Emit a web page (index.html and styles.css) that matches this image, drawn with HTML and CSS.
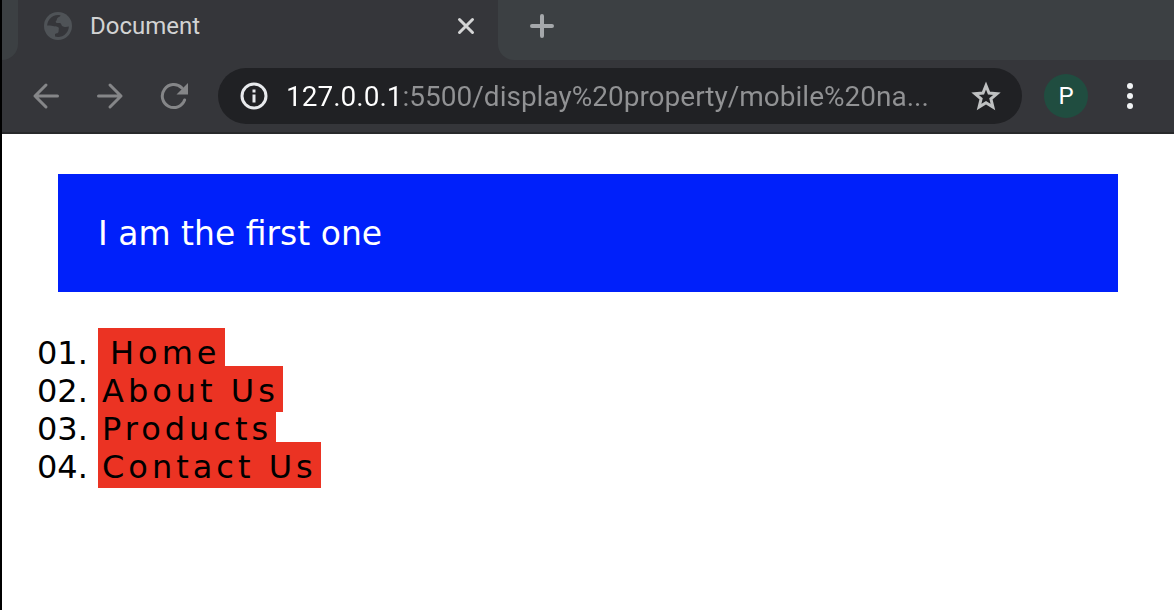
FILE: index.html
```html
<!DOCTYPE html>
<html lang="en">
<head>
<meta charset="utf-8">
<meta name="viewport" content="width=device-width, initial-scale=1">
<title>Document</title>
<link rel="stylesheet" href="styles.css">
</head>
<body class="window">
<header class="browser">
  <div class="tabs">
    <div class="tab-before"></div>
    <div class="tab">
      <svg class="globe" viewBox="0 0 28 28" width="28" height="28" aria-hidden="true">
        <circle cx="14" cy="14" r="14" fill="#4f5357"/>
        <path d="M16.500 3.300C16.500 5 14.500 5 13.500 6c-.9 1.100-.5 2.300-1.500 3-.8.900.2 2 1.500 2h2.500c1.300 0 1.200 2.500 2.500 3.300 1.300.8 4.200.9 6.400.2A11 11 0 0 1 11 24.600v-2.300c0-1 3.500-.7 3.500-2.600 0-1.800 1.100-3.800-.7-4.700-1.800-.8-3.600-.2-4.800-.9-1.600-1-3.600-.6-5.900-.6A11 11 0 0 1 16.500 3.300z" fill="#35363a"/>
      </svg>
      <span class="tab-title">Document</span>
      <button class="icon-button close" aria-label="Close tab">
        <svg viewBox="0 0 20 20" width="20" height="20" fill="none" stroke="#d4d5d5" stroke-width="3" stroke-linecap="round"><path d="M3.500 3.500l13 13M16.500 3.500l-13 13"/></svg>
      </button>
    </div>
    <div class="tab-after">
      <button class="icon-button" aria-label="New tab">
        <svg viewBox="0 0 24 24" width="24" height="24" fill="none" stroke="#a5a8ab" stroke-width="4" stroke-linecap="round"><path d="M12 2v20M2 12h20"/></svg>
      </button>
    </div>
  </div>
  <nav class="toolbar" aria-label="Browser toolbar">
    <button class="icon-button" aria-label="Back">
      <svg viewBox="0 0 28 28" width="28" height="28" fill="none" stroke="#858688" stroke-width="3" stroke-linecap="round" stroke-linejoin="round"><path d="M25.500 14H3M14 3L3 14l11 11"/></svg>
    </button>
    <button class="icon-button" aria-label="Forward">
      <svg viewBox="0 0 28 28" width="28" height="28" fill="none" stroke="#858688" stroke-width="3" stroke-linecap="round" stroke-linejoin="round"><path d="M2.500 14H25M14 3l11 11-11 11"/></svg>
    </button>
    <button class="icon-button" aria-label="Reload">
      <svg viewBox="0 0 28 28" width="28" height="28"><path d="M21.800 5.800A11.500 11.500 0 1 0 24.600 18" fill="none" stroke="#858688" stroke-width="3" stroke-linecap="round"/><path d="M28 1v11.500H16.500z" fill="#858688"/></svg>
    </button>
    <div class="omnibox">
      <svg viewBox="0 0 28 28" width="28" height="28" aria-hidden="true"><circle cx="14" cy="14" r="12" fill="none" stroke="#e8eaed" stroke-width="3"/><path d="M12.500 7.500h3v3h-3zM12.500 12.500h3v8h-3z" fill="#e8eaed"/></svg>
      <input class="address" type="text" aria-label="Address" value="127.0.0.1:5500/display%20property/mobile%20na...">
      <button class="icon-button" aria-label="Bookmark this page">
        <svg viewBox="0 0 30 30" width="30" height="30" fill="none" stroke="#bfc1c2" stroke-width="3"><path d="M15 4.500l3 7.500 8 .7-6.100 5.200 2 8.100-6.900-4.300L8.100 26l2-8.100L4 12.700l8-.7z"/></svg>
      </button>
    </div>
    <button class="avatar" aria-label="Profile P">P</button>
    <button class="icon-button" aria-label="Menu">
      <svg viewBox="0 0 28 28" width="28" height="28" fill="#f1f3f4"><circle cx="14" cy="4" r="3"/><circle cx="14" cy="14" r="3"/><circle cx="14" cy="24" r="3"/></svg>
    </button>
  </nav>
</header>
<main class="page">
  <div class="first">I am the first one</div>
  <ol class="menu">
    <li><a class="menu-link menu-home" href="#home">Home</a></li>
    <li><a class="menu-link" href="#about">About Us</a></li>
    <li><a class="menu-link" href="#products">Products</a></li>
    <li><a class="menu-link" href="#contact">Contact Us</a></li>
  </ol>
</main>
</body>
</html>
```

FILE: styles.css
```css
* {
  box-sizing: border-box;
}

.window {
  margin: 0;
  min-height: 100vh;
  border-left: 2px solid #000;
  background: #fff;
}

.browser {
  background: #35363a;
  border-bottom: 2px solid #28292b;
  font-family: Roboto, "Liberation Sans", sans-serif;
}

.tabs {
  display: flex;
  height: 60px;
}

.tab-before {
  width: 16px;
  background: #3c4043;
  border-bottom-right-radius: 16px;
}

.tab {
  display: flex;
  align-items: center;
  width: 480px;
  padding: 0 22px 8px 26px;
}

.globe {
  flex: none;
}

.tab-title {
  flex: 1;
  margin-left: 18px;
  font-size: 24px;
  line-height: 28px;
  color: #d2d3d3;
}

.tab-after {
  flex: 1;
  display: flex;
  align-items: center;
  padding: 0 32px 8px;
  background: #3c4043;
  border-bottom-left-radius: 16px;
}

.icon-button {
  display: flex;
  flex: none;
  padding: 0;
  border: 0;
  background: none;
}

.toolbar {
  display: flex;
  align-items: center;
  gap: 36px;
  padding: 8px 30px;
}

.omnibox {
  flex: 1;
  display: flex;
  align-items: center;
  min-width: 0;
  height: 56px;
  margin: 0 -14px 0 -6px;
  padding: 0 21px 0 22px;
  border-radius: 28px;
  background: #202124;
}

.address {
  flex: 1;
  min-width: 0;
  height: 40px;
  margin: 0 16px 0 18px;
  padding: 0;
  border: 0;
  outline: 0;
  background: linear-gradient(to right, #fff 117px, #919294 117px);
  background-clip: text;
  -webkit-text-fill-color: transparent;
  color: #919294;
  font-family: inherit;
  font-size: 28px;
}

.avatar {
  flex: none;
  width: 44px;
  height: 44px;
  margin-right: -8px;
  padding: 0;
  border: 0;
  border-radius: 50%;
  background: #204d40;
  color: #fff;
  font-family: inherit;
  font-size: 24px;
}

.page {
  padding: 40px 16px;
  font-family: Verdana, "DejaVu Sans", sans-serif;
  font-size: 32px;
  line-height: 38px;
  color: #000;
}

.first {
  margin: 0 40px 42px;
  padding: 41px 40px 39px;
  background: #0020fa;
  color: #fff;
  font-size: 33px;
}

.menu {
  margin: 0;
  padding-left: 80px;
  list-style: decimal-leading-zero;
}

.menu-link {
  padding: 6px 4px 2px;
  background: #eb3323;
  color: #000;
  letter-spacing: 4px;
  text-decoration: none;
}

.menu-home {
  padding-left: 12px;
}
```
